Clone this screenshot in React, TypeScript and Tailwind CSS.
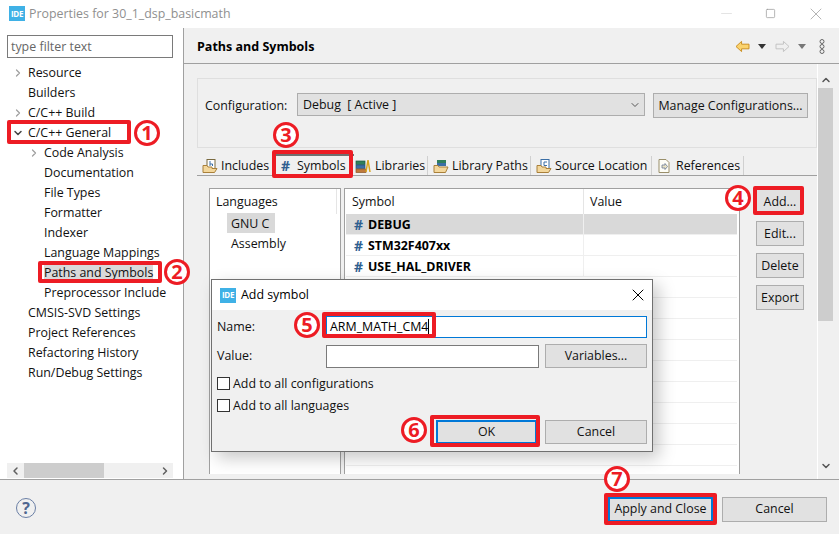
import { ChevronDown, ChevronRight, ChevronLeft, ChevronUp, Minus, Square, X } from 'lucide-react';
import type { ReactNode } from 'react';

const TREE_ITEMS: Array<{ label: string; level: number; arrow?: 'right' | 'down' }> = [
  { label: 'Resource', level: 1, arrow: 'right' },
  { label: 'Builders', level: 1 },
  { label: 'C/C++ Build', level: 1, arrow: 'right' },
  { label: 'C/C++ General', level: 1, arrow: 'down' },
  { label: 'Code Analysis', level: 2, arrow: 'right' },
  { label: 'Documentation', level: 2 },
  { label: 'File Types', level: 2 },
  { label: 'Formatter', level: 2 },
  { label: 'Indexer', level: 2 },
  { label: 'Language Mappings', level: 2 },
  { label: 'Paths and Symbols', level: 2 },
  { label: 'Preprocessor Include', level: 2 },
  { label: 'CMSIS-SVD Settings', level: 1 },
  { label: 'Project References', level: 1 },
  { label: 'Refactoring History', level: 1 },
  { label: 'Run/Debug Settings', level: 1 },
];

const SYMBOLS = ['DEBUG', 'STM32F407xx', 'USE_HAL_DRIVER'];

function IdeLogo() {
  return (
    <span className="flex h-[15px] w-4 shrink-0 items-center justify-center bg-[#3fb1e6] text-[8px] font-bold leading-none tracking-[-0.3px] text-white">
      IDE
    </span>
  );
}

function Btn({ children, className, focused }: { children: ReactNode; className: string; focused?: boolean }) {
  return (
    <div
      className={`flex items-center justify-center bg-[#e1e1e1] text-[#111] ${
        focused ? 'border-2 border-[#0078d7]' : 'border border-[#adadad]'
      } ${className}`}
    >
      {children}
    </div>
  );
}

function FolderIcon({ tint, mark }: { tint: string; mark: 'h' | 'c' }) {
  return (
    <svg width="16" height="16" viewBox="0 0 16 16" className="shrink-0">
      <rect x="5" y="1.5" width="8" height="9" fill="#fff" stroke={tint} />
      {mark === 'h' ? (
        <path d="M8 3 V8 M8 6 H10.5 V8" fill="none" stroke="#3a6ea5" />
      ) : (
        <path d="M11 4 H8 V7.5 H11" fill="none" stroke="#3a6ea5" />
      )}
      <path d="M1 14.5 L1 7.5 L5 7.5 L6 9 L10 9 L10 10.5 L15 10.5 L12.5 14.5 Z" fill="#f3d79c" stroke="#a9803a" />
    </svg>
  );
}

function BooksIcon() {
  return (
    <svg width="16" height="16" viewBox="0 0 16 16" className="shrink-0">
      <rect x="1" y="3" width="9" height="3.5" fill="#2f7f5b" stroke="#1d5a3f" strokeWidth="0.7" />
      <rect x="1" y="7" width="9" height="3.5" fill="#3a6ea5" stroke="#27507c" strokeWidth="0.7" />
      <rect x="1" y="11" width="10" height="3.5" fill="#c07a3c" stroke="#8a5526" strokeWidth="0.7" />
      <path d="M11 14 L13 2 L15 14" fill="none" stroke="#d9a520" strokeWidth="1.5" />
    </svg>
  );
}

function LibFolderIcon() {
  return (
    <svg width="16" height="16" viewBox="0 0 16 16" className="shrink-0">
      <rect x="4" y="2" width="9" height="3" fill="#2f7f5b" />
      <rect x="4" y="5" width="9" height="3" fill="#3a6ea5" />
      <path d="M1 14.5 L1 7.5 L5 7.5 L6 9 L15 9 L12.5 14.5 Z" fill="#f3d79c" stroke="#a9803a" />
    </svg>
  );
}

function RefIcon() {
  return (
    <svg width="16" height="16" viewBox="0 0 16 16" className="shrink-0">
      <path d="M3 1.5 H10 L13 4.5 V14.5 H3 Z" fill="#fdfdf6" stroke="#9a8f6a" />
      <path d="M6 7 H9 V5.5 L11.5 8.5 L9 11.5 V10 H6 Z" fill="#e9e3c4" stroke="#6a7a94" strokeWidth="0.8" />
    </svg>
  );
}

function SymbolRow({ name, selected }: { name: string; selected: boolean }) {
  return (
    <div className={`flex h-[21px] shrink-0 border-b border-[#efefef] ${selected ? 'bg-[#d9d9d9]' : ''}`}>
      <div className="flex w-[237px] items-center gap-[4px] pl-[8px] pt-[1px] font-bold text-black">
        <span className="w-[10px] text-[14px] text-[#2f5f8f]">#</span>
        <span>{name}</span>
      </div>
      <div className="flex-1 border-l border-[#efefef]" />
    </div>
  );
}

function Marker({ n, className }: { n: number; className: string }) {
  return (
    <div className={`absolute flex h-[26px] w-[26px] items-center justify-center rounded-full border-[3px] border-[#ed1c24] bg-white text-[20px] font-bold leading-none text-[#ed1c24] ${className}`}>
      {n}
    </div>
  );
}

function RedBox({ className }: { className: string }) {
  return <div className={`pointer-events-none absolute rounded-[2px] border-[4px] border-[#ed1c24] ${className}`} />;
}

export default function App() {
  return (
    <div className="relative flex h-[534px] w-[839px] flex-col overflow-hidden bg-[#f0f0f0] text-[12.4px] leading-[16px] text-[#111] [font-family:'Open_Sans','Noto_Sans',sans-serif]">
      {/* title bar */}
      <div className="flex h-[28px] shrink-0 items-center bg-white pb-[1px] pl-[9px] pr-[13px]">
        <IdeLogo />
        <span className="ml-[4px] text-[#8f8f8f]">Properties for 30_1_dsp_basicmath</span>
        <div className="ml-auto flex items-center gap-[30px] text-[#9a9a9a]">
          <Minus size={17} strokeWidth={0.7} className="text-[#c8c8c8]" />
          <Square size={11} strokeWidth={1.6} />
          <X size={20} strokeWidth={0.9} />
        </div>
      </div>

      <div className="flex min-h-0 flex-1">
        {/* left tree */}
        <div className="flex w-[184px] shrink-0 flex-col border-r border-[#a0a0a0] bg-white pl-[7px] pr-[10px] pt-[7px]">
          <div className="flex h-[23px] shrink-0 items-center border border-[#7a7a7a] pl-[3px] text-[#666]">type filter text</div>
          <div className="mt-[5px] flex-1">
            {TREE_ITEMS.map((item) => (
              <div key={item.label} className={`relative flex h-[20px] items-center whitespace-nowrap ${item.level === 1 ? 'pl-[21px]' : 'pl-[37px]'}`}>
                {item.arrow === 'right' && (
                  <ChevronRight size={12} strokeWidth={2.5} className={`absolute text-[#a0a0a0] ${item.level === 1 ? 'left-[5px]' : 'left-[21px]'}`} />
                )}
                {item.arrow === 'down' && <ChevronDown size={12} strokeWidth={3} className="absolute left-[5px] text-[#444]" />}
                <span className={item.label === 'Paths and Symbols' ? 'bg-[#d9d9d9]' : ''}>{item.label}</span>
              </div>
            ))}
          </div>
          <div className="mb-[1px] flex h-[15px] shrink-0 items-center bg-[#f0f0f0]">
            <ChevronLeft size={12} strokeWidth={3} className="ml-[2px] w-[13px] text-[#606060]" />
            <div className="ml-[2px] h-full w-[80px] bg-[#cdcdcd]" />
            <ChevronRight size={12} strokeWidth={3} className="ml-auto mr-[2px] text-[#606060]" />
          </div>
        </div>

        {/* right pane */}
        <div className="flex min-w-0 flex-1 flex-col">
          <div className="flex h-[36px] shrink-0 items-center border-b border-[#a0a0a0] pl-[13px] pr-[14px] pt-[2px]">
            <span className="text-[12.5px] font-bold text-black">Paths and Symbols</span>
            <div className="ml-auto flex items-center">
              <svg width="15" height="13" viewBox="0 0 16 14">
                <path d="M1 7 L7 1.5 V4.5 H15 V9.5 H7 V12.5 Z" fill="#fbd36d" stroke="#c98a1b" />
              </svg>
              <svg width="8" height="5" viewBox="0 0 8 5" className="ml-[8px]">
                <path d="M0 0 H8 L4 5 Z" fill="#333" />
              </svg>
              <svg width="15" height="13" viewBox="0 0 16 14" className="ml-[9px]">
                <path d="M15 7 L9 1.5 V4.5 H1 V9.5 H9 V12.5 Z" fill="#f0f0f0" stroke="#c0c0c0" />
              </svg>
              <svg width="8" height="5" viewBox="0 0 8 5" className="ml-[8px]">
                <path d="M0 0 H8 L4 5 Z" fill="#777" />
              </svg>
              <svg width="6" height="15" viewBox="0 0 6 15" className="ml-[13px]">
                <circle cx="3" cy="2.5" r="2" fill="none" stroke="#666" />
                <circle cx="3" cy="7.5" r="2" fill="none" stroke="#666" />
                <circle cx="3" cy="12.5" r="2" fill="none" stroke="#666" />
              </svg>
            </div>
          </div>

          <div className="flex min-h-0 flex-1">
            <div className="flex min-w-0 w-[633px] flex-col pl-[13px] pt-[14px]">
              {/* configuration */}
              <div className="flex h-[70px] shrink-0 items-start border border-[#dfdfdf] pl-[7px] pt-[14px]">
                <span className="mt-[5px] w-[92px]">Configuration:</span>
                <div className="flex h-[23px] w-[348px] items-center justify-between border border-[#adadad] bg-[#e1e1e1] pl-[5px] pr-[3px]">
                  <span className="whitespace-pre">Debug  [ Active ]</span>
                  <ChevronDown size={12} className="text-[#555]" />
                </div>
                <Btn className="ml-[8px] h-[25px] w-[155px]">Manage Configurations...</Btn>
              </div>

              {/* tabs */}
              <div className="mt-[6px] flex h-[22px] shrink-0 items-stretch border-b border-[#a0a0a0] pl-[5px] pt-[2px]">
                <div className="flex w-[71px] items-center gap-[3px] border-r border-[#d0d0d0]"><FolderIcon tint="#7a6a40" mark="h" />Includes</div>
                <div className="mt-[-2px] flex w-[81px] items-center gap-[6px] border-t-2 border-t-[#707070] pl-[8px]">
                  <span className="w-[10px] text-[14px] font-bold text-[#2f5f8f]">#</span>Symbols
                </div>
                <div className="flex w-[74px] items-center gap-[4px] border-r border-[#d0d0d0] pl-[1px]"><BooksIcon />Libraries</div>
                <div className="flex w-[103px] items-center gap-[3px] border-r border-[#d0d0d0] pl-[5px]"><LibFolderIcon />Library Paths</div>
                <div className="flex w-[121px] items-center gap-[3px] border-r border-[#d0d0d0] pl-[5px]"><FolderIcon tint="#3a6ea5" mark="c" />Source Location</div>
                <div className="flex w-[92px] items-center gap-[4px] border-r border-[#d0d0d0] pl-[4px]"><RefIcon />References</div>
              </div>

              {/* tables */}
              <div className="ml-[12px] mt-[12px] flex min-h-0 flex-1">
                <div className="mb-[5px] w-[132px] shrink-0 border-l border-r border-t border-[#a0a0a0] bg-white">
                  <div className="flex h-[25px] w-[127px] items-center border-r border-[#e5e5e5] pl-[6px]">Languages</div>
                  <div className="ml-[17px] mt-[-1px] flex h-[20px] w-[48px] items-center bg-[#d9d9d9] pl-[4px] pt-[1px]">GNU C</div>
                  <div className="ml-[21px] flex h-[20px] items-center pt-[1px]">Assembly</div>
                </div>
                <div className="mb-[5px] ml-[3px] flex w-[396px] shrink-0 flex-col overflow-hidden border-l border-r border-t border-[#a0a0a0] bg-white pl-[1px] pr-[2px]">
                  <div className="flex h-[25px] shrink-0">
                    <div className="flex w-[237px] items-center pl-[6px]">Symbol</div>
                    <div className="flex flex-1 items-center border-l border-[#e5e5e5] pl-[6px]">Value</div>
                  </div>
                  {SYMBOLS.map((name, i) => (
                    <SymbolRow key={name} name={name} selected={i === 0} />
                  ))}
                  {Array.from({ length: 10 }, (_, i) => (
                    <div key={i} className="h-[21px] shrink-0 border-b border-[#efefef]" />
                  ))}
                </div>
                <div className="ml-[16px] mt-[1px] flex w-[48px] shrink-0 flex-col gap-[7px]">
                  <Btn className="h-[25px]">Add...</Btn>
                  <Btn className="h-[25px]">Edit...</Btn>
                  <Btn className="h-[25px]">Delete</Btn>
                  <Btn className="h-[25px]">Export</Btn>
                </div>
              </div>
            </div>

            {/* page scrollbar */}
            <div className="flex w-[16px] shrink-0 flex-col border-l border-white">
              <ChevronUp size={12} strokeWidth={3} className="ml-[2px] mt-[10px] h-[12px] shrink-0 text-[#555]" />
              <div className="mt-[2px] h-[233px] bg-[#cdcdcd]" />
              <ChevronDown size={12} strokeWidth={3} className="ml-[2px] mt-auto mb-[7px] text-[#555]" />
            </div>
          </div>
        </div>
      </div>

      {/* footer */}
      <div className="flex h-[55px] shrink-0 items-center border-t border-[#a0a0a0] pl-[16px] pr-[12px] pt-[4px]">
        <div className="mb-[2px] flex h-[20px] w-[20px] items-center justify-center rounded-full border border-[#6a7fa5] text-[16px] font-bold text-[#4f6690]">?</div>
        <Btn focused className="ml-auto h-[25px] w-[105px]">Apply and Close</Btn>
        <Btn className="ml-[9px] h-[25px] w-[105px]">Cancel</Btn>
      </div>

      {/* add symbol dialog */}
      <div className="absolute left-[211px] top-[279px] flex h-[173px] w-[442px] flex-col border border-[#707070] bg-[#f0f0f0] shadow-[6px_6px_16px_rgba(0,0,0,0.22)]">
        <div className="flex h-[30px] shrink-0 items-center bg-white pl-[8px] pr-[4px]">
          <IdeLogo />
          <span className="ml-[5px] text-black">Add symbol</span>
          <X size={20} strokeWidth={1.2} className="ml-auto text-black" />
        </div>
        <div className="flex flex-1 flex-col px-[5px] pt-[6px]">
          <div className="flex h-[22px] shrink-0 items-center">
            <span className="mb-[1px] w-[109px]">Name:</span>
            <div className="flex h-full flex-1 items-center border border-[#0078d7] bg-white pl-[3px]">
              <span className="border-r border-black text-black">ARM_MATH_CM4</span>
            </div>
          </div>
          <div className="mt-[6px] flex h-[24px] shrink-0 items-center">
            <span className="w-[109px]">Value:</span>
            <div className="mt-[1px] h-[23px] w-[213px] border border-[#7a7a7a] bg-white" />
            <Btn className="ml-[6px] h-[24px] flex-1">Variables...</Btn>
          </div>
          <div className="mt-[9px] flex h-[13px] shrink-0 items-center gap-[3px]">
            <div className="h-[13px] w-[13px] border border-[#333] bg-white" />
            Add to all configurations
          </div>
          <div className="mt-[9px] flex h-[13px] shrink-0 items-center gap-[3px]">
            <div className="h-[13px] w-[13px] border border-[#333] bg-white" />
            Add to all languages
          </div>
          <div className="mt-[8px] flex justify-end gap-[8px]">
            <Btn focused className="h-[24px] w-[101px]">OK</Btn>
            <Btn className="h-[24px] w-[102px]">Cancel</Btn>
          </div>
        </div>
      </div>

      {/* red annotations */}
      <RedBox className="left-[7px] top-[120px] h-[24px] w-[124px]" />
      <RedBox className="left-[38px] top-[261px] h-[22px] w-[124px]" />
      <RedBox className="left-[272px] top-[150px] h-[28px] w-[81px]" />
      <RedBox className="left-[753px] top-[186px] h-[29px] w-[51px]" />
      <RedBox className="left-[322px] top-[312px] h-[26px] w-[114px]" />
      <RedBox className="left-[430px] top-[415px] h-[32px] w-[110px]" />
      <RedBox className="left-[604px] top-[493px] h-[32px] w-[113px]" />
      <Marker n={1} className="left-[134px] top-[120px]" />
      <Marker n={2} className="left-[164px] top-[259px]" />
      <Marker n={3} className="left-[273px] top-[122px]" />
      <Marker n={4} className="left-[725px] top-[185px]" />
      <Marker n={5} className="left-[294px] top-[312px]" />
      <Marker n={6} className="left-[401px] top-[417px]" />
      <Marker n={7} className="left-[604px] top-[466px]" />
    </div>
  );
}
